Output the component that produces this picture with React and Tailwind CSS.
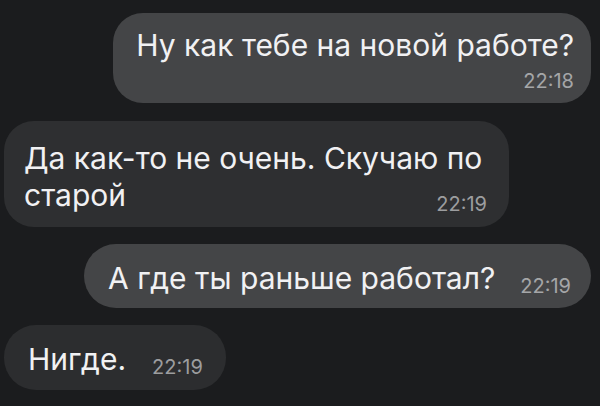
export default function App() {
  const font = { fontFamily: 'Inter, "Liberation Sans", Arial, sans-serif' };
  return (
    <div
      className="w-[600px] h-[406px] bg-[#1b1c1e] overflow-hidden flex flex-col pt-[13px] pl-[4px] pr-[9px] gap-[17px] text-[#f1f1f3]"
      style={font}
    >
      {/* Bubble 1 - outgoing */}
      <div className="self-end flex flex-col rounded-[30px] bg-[#444547] pl-[23px] pr-[17px] pt-[15px] pb-[10px]">
        <div className="text-[30px] leading-[34px]">Ну как тебе на новой работе?</div>
        <div className="self-end mt-[7px] text-[20px] leading-[24px] text-[#a5a6a8]">22:18</div>
      </div>

      {/* Bubble 2 - incoming */}
      <div className="self-start w-[505px] flex flex-col rounded-[30px] bg-[#2e2f31] pl-[20px] pr-[22px] pt-[19px] pb-[13px] mt-[1px]">
        <div className="text-[30px] leading-[37px] whitespace-nowrap">Да как-то не очень. Скучаю по</div>
        <div className="flex items-end justify-between">
          <span className="text-[30px] leading-[37px]">старой</span>
          <span className="text-[20px] leading-[24px] text-[#9c9d9f] translate-y-[2px]">22:19</span>
        </div>
      </div>

      {/* Bubble 3 - outgoing */}
      <div className="self-end flex items-end gap-[25px] rounded-[32px] bg-[#444547] pl-[24px] pr-[20px] pt-[17px] pb-[13px]">
        <span className="text-[30px] leading-[34px]">А где ты раньше работал?</span>
        <span className="text-[20px] leading-[24px] text-[#a5a6a8] translate-y-[3px]">22:19</span>
      </div>

      {/* Bubble 4 - incoming */}
      <div className="self-start flex items-end gap-[26px] rounded-[32px] bg-[#2c2d2f] pl-[24px] pr-[23px] pt-[17px] pb-[14px]">
        <span className="text-[30px] leading-[34px]">Нигде.</span>
        <span className="text-[20px] leading-[24px] text-[#9c9d9f] translate-y-[3px]">22:19</span>
      </div>
    </div>
  );
}
